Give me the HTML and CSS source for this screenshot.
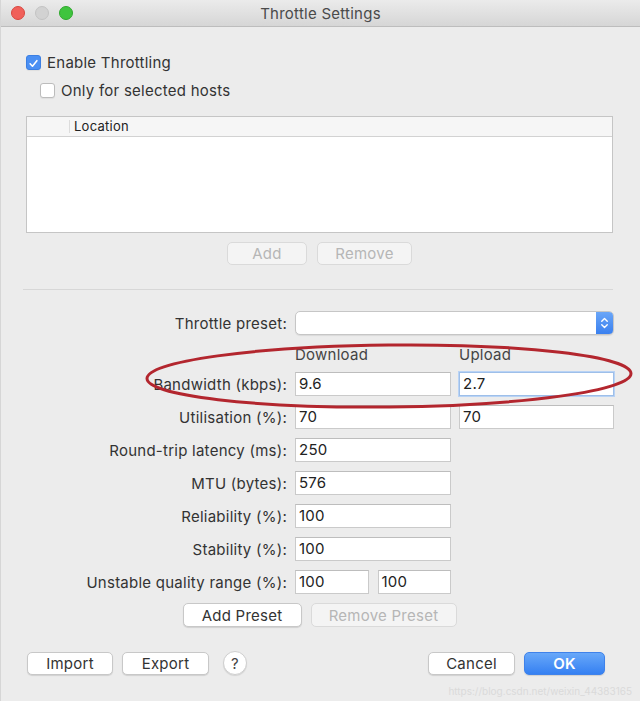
FILE: index.html
```html
<!DOCTYPE html>
<html lang="en">
<head>
  <meta charset="UTF-8">
  <title>Throttle Settings</title>
  <link rel="stylesheet" href="styles.css">
</head>
<body>
  <div class="window">
    <header class="titlebar">
      <div class="lights">
        <span class="light red"></span>
        <span class="light grey"></span>
        <span class="light green"></span>
      </div>
      <h1>Throttle Settings</h1>
    </header>

    <div class="content">
      <label class="check-row">
        <span class="checkbox checked">
          <svg viewBox="0 0 15 15" width="15" height="15"><path d="M3.6 7.8 L6.3 10.6 L11.4 4.2" fill="none" stroke="#fff" stroke-width="1.8" stroke-linecap="round" stroke-linejoin="round"/></svg>
        </span>
        Enable Throttling
      </label>
      <label class="check-row indent">
        <span class="checkbox"></span>
        Only for selected hosts
      </label>

      <div class="table">
        <div class="table-head">
          <span class="col-spacer"></span>
          <span class="col-title">Location</span>
        </div>
      </div>

      <div class="button-row small-gap">
        <button class="btn disabled btn-add">Add</button>
        <button class="btn disabled btn-remove">Remove</button>
      </div>

      <div class="separator"></div>

      <div class="form">
        <div class="label">Throttle preset:</div>
        <div class="select span2">
          <span class="stepper">
            <svg viewBox="0 0 17 24" width="17" height="24"><path d="M5.5 10 L8.5 7 L11.5 10 M5.5 14 L8.5 17 L11.5 14" fill="none" stroke="#fff" stroke-width="1.5" stroke-linecap="round" stroke-linejoin="round"/></svg>
          </span>
        </div>

        <div class="label"></div>
        <div class="col-head">Download</div>
        <div class="col-head">Upload</div>

        <div class="label">Bandwidth (kbps):</div>
        <div class="field">9.6</div>
        <div class="field focus">2.7</div>

        <div class="label">Utilisation (%):</div>
        <div class="field">70</div>
        <div class="field">70</div>

        <div class="label">Round-trip latency (ms):</div>
        <div class="field">250</div>
        <div></div>

        <div class="label">MTU (bytes):</div>
        <div class="field">576</div>
        <div></div>

        <div class="label">Reliability (%):</div>
        <div class="field">100</div>
        <div></div>

        <div class="label">Stability (%):</div>
        <div class="field">100</div>
        <div></div>

        <div class="label">Unstable quality range (%):</div>
        <div class="pair">
          <div class="field">100</div>
          <div class="field">100</div>
        </div>
        <div></div>
      </div>

      <div class="button-row preset-row">
        <button class="btn btn-preset">Add Preset</button>
        <button class="btn disabled btn-remove-preset">Remove Preset</button>
      </div>

      <div class="footer">
        <div class="footer-left">
          <button class="btn btn-import">Import</button>
          <button class="btn btn-export">Export</button>
          <span class="help">?</span>
        </div>
        <div class="footer-right">
          <button class="btn btn-cancel">Cancel</button>
          <button class="btn primary btn-ok">OK</button>
        </div>
      </div>
    </div>

    <svg class="annotation" viewBox="0 0 500 72" width="500" height="72">
      <ellipse cx="245" cy="35" rx="242" ry="31" fill="none" stroke="#b3262e" stroke-width="3" transform="rotate(-0.6 245 35)"/>
    </svg>

    <span class="watermark">https://blog.csdn.net/weixin_44383165</span>
  </div>
</body>
</html>
```

FILE: styles.css
```css
body {
  margin: 0;
  padding: 0;
  font-family: Inter, "Liberation Sans", Arial, sans-serif;
  letter-spacing: 0.25px;
  color: #2f2f2f;
  background: #ececec;
}
.window {
  position: relative;
  width: 640px;
  height: 701px;
  background: #ececec;
  box-sizing: border-box;
  border-left: 1px solid #d6d6d6;
  overflow: hidden;
}
.titlebar {
  height: 26px;
  border-bottom: 1px solid #bdbdbd;
  background: linear-gradient(#ebebeb, #d6d6d6);
  display: flex;
  align-items: center;
  justify-content: center;
  position: relative;
}
.titlebar h1 {
  margin: 0;
  font-size: 15px;
  font-weight: normal;
  color: #4a4a4a;
}
.lights {
  position: absolute;
  left: 10px;
  top: 6px;
  display: flex;
  gap: 10px;
}
.light {
  width: 14px;
  height: 14px;
  border-radius: 50%;
  box-sizing: border-box;
}
.light.red {
  background: #f0605a;
  border: 1px solid #d9473f;
}
.light.grey {
  background: #d2d2d2;
  border: 1px solid #c3c3c3;
}
.light.green {
  background: #3fc43e;
  border: 1px solid #2ea82c;
}
.content {
  padding: 25px 27px 0 25px;
}
.check-row {
  display: flex;
  align-items: center;
  height: 20px;
  font-size: 15px;
  color: #333;
  gap: 6px;
}
.check-row.indent {
  margin-top: 8px;
  padding-left: 14px;
}
.checkbox {
  width: 15px;
  height: 15px;
  box-sizing: border-box;
  border-radius: 3px;
  background: #fff;
  border: 1px solid #bcbcbc;
  box-shadow: 0 1px 1px rgba(0,0,0,0.06);
  display: inline-flex;
}
.checkbox.checked {
  background: #4a8ff3;
  border-color: #3b7fe3;
}
.table {
  margin-top: 16px;
  height: 117px;
  box-sizing: border-box;
  border: 1px solid #c5c5c5;
  background: #fff;
}
.table-head {
  display: flex;
  height: 19px;
  border-bottom: 1px solid #d2d2d2;
  background: #f6f6f6;
  font-size: 13px;
}
.col-spacer {
  width: 42px;
  border-right: 1px solid #dcdcdc;
  margin: 3px 0;
}
.col-title {
  padding-left: 4px;
  line-height: 19px;
  color: #222;
}
.button-row {
  display: flex;
  justify-content: center;
  gap: 10px;
  margin-top: 9px;
}
.btn {
  height: 23px;
  box-sizing: border-box;
  border: 1px solid #c8c8c8;
  border-radius: 5px;
  background: #fff;
  box-shadow: 0 1px 1px rgba(0,0,0,0.12);
  font-family: inherit;
  letter-spacing: inherit;
  font-size: 15px;
  color: #333;
  padding: 0;
}
.btn.disabled {
  background: #f4f4f4;
  border-color: #dadada;
  box-shadow: none;
  color: #b6b6b6;
}
.btn-add {
  width: 80px;
}
.btn-remove {
  width: 95px;
}
.separator {
  margin-top: 24px;
  height: 1px;
  margin-left: -3px;
  background: #d7d7d7;
}
.form {
  margin-top: 21px;
  display: grid;
  grid-template-columns: 261px 156px 155px;
  column-gap: 8px;
  row-gap: 9px;
  align-items: center;
}
.form .label {
  text-align: right;
  font-size: 15px;
  color: #333;
}
.span2 {
  grid-column: span 2;
}
.select {
  height: 24px;
  box-sizing: border-box;
  border: 1px solid #c6c6c6;
  border-radius: 5px;
  background: #fff;
  display: flex;
  justify-content: flex-end;
  overflow: hidden;
  box-shadow: 0 1px 1px rgba(0,0,0,0.08);
}
.stepper {
  width: 17px;
  height: 22px;
  background: linear-gradient(#6aa6f8, #3a80ef);
  display: flex;
  align-items: center;
  justify-content: center;
}
.stepper svg {
  height: 22px;
}
.col-head {
  font-size: 15px;
  color: #444;
  height: 16px;
  line-height: 16px;
  margin-top: 3px;
}
.field {
  height: 24px;
  box-sizing: border-box;
  border: 1px solid #cacaca;
  border-top-color: #bdbdbd;
  background: #fff;
  font-size: 15px;
  line-height: 22px;
  padding-left: 3px;
  color: #222;
}
.field.focus {
  border-color: #9ebfe9;
  box-shadow: 0 0 0 1px #b9d3f5;
}
.pair {
  display: flex;
  gap: 9px;
}
.pair .field {
  flex: 1;
}
.preset-row {
  margin-top: 9px;
  gap: 9px;
}
.btn-preset {
  width: 119px;
  height: 24px;
}
.btn-remove-preset {
  width: 146px;
  height: 24px;
}
.footer {
  margin-top: 24px;
  display: flex;
  justify-content: space-between;
  padding-left: 1px;
  padding-right: 8px;
}
.footer-left,
.footer-right {
  display: flex;
  align-items: center;
  gap: 9px;
}
.btn-import {
  width: 86px;
}
.btn-export {
  width: 87px;
}
.btn-cancel {
  width: 87px;
}
.btn-ok {
  width: 81px;
}
.btn.primary {
  background: linear-gradient(#68a8f9, #3580f2);
  border-color: #3f82ea;
  color: #fff;
  font-weight: 600;
}
.help {
  margin-left: 5px;
  width: 24px;
  height: 24px;
  box-sizing: border-box;
  border-radius: 50%;
  border: 1px solid #cfcfcf;
  background: #fff;
  box-shadow: 0 1px 1px rgba(0,0,0,0.1);
  display: flex;
  align-items: center;
  justify-content: center;
  font-size: 15px;
  color: #444;
}
.annotation {
  position: absolute;
  left: 143px;
  top: 341px;
}
.watermark {
  position: absolute;
  right: 8px;
  bottom: 4px;
  font-size: 10px;
  letter-spacing: 0;
  color: #dadada;
}
```
